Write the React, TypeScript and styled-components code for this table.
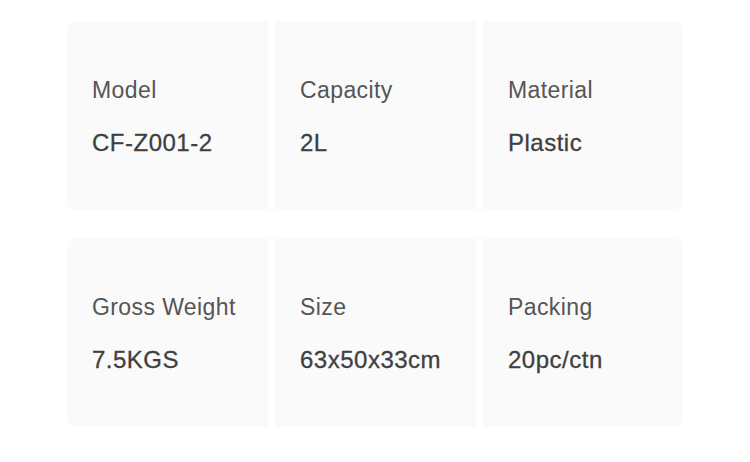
import React from "react";
import { styled, createGlobalStyle } from "styled-components";

const GlobalStyle = createGlobalStyle`
  html, body {
    margin: 0;
    padding: 0;
    background: #ffffff;
    font-family: "Liberation Sans", Arial, sans-serif;
  }
`;

const Page = styled.div`
  width: 750px;
  height: 462px;
  padding: 21px 0 0 67px;
  box-sizing: border-box;
`;

const Grid = styled.div`
  display: grid;
  grid-template-columns: 201px 201px 200px;
  grid-auto-rows: 189px;
  column-gap: 7px;
  row-gap: 28px;
`;

const Card = styled.div<{ $corner?: "left" | "right" }>`
  background: #fafafa;
  padding: 56px 0 0 25px;
  box-sizing: border-box;
  border-radius: ${(p) =>
    p.$corner === "left"
      ? "10px 0 0 10px"
      : p.$corner === "right"
      ? "0 10px 10px 0"
      : "0"};
`;

const Label = styled.div`
  font-size: 23px;
  line-height: 26px;
  letter-spacing: 0.4px;
  color: #555555;
`;

const Value = styled.div`
  margin-top: 27px;
  font-size: 24px;
  line-height: 26px;
  letter-spacing: 0.5px;
  color: #404040;
  -webkit-text-stroke: 0.3px #404040;
`;

const specs = [
  { label: "Model", value: "CF-Z001-2" },
  { label: "Capacity", value: "2L" },
  { label: "Material", value: "Plastic" },
  { label: "Gross Weight", value: "7.5KGS" },
  { label: "Size", value: "63x50x33cm" },
  { label: "Packing", value: "20pc/ctn" },
];

const App = () => {
  return (
    <>
      <GlobalStyle />
      <Page>
        <Grid>
          {specs.map((s, i) => (
            <Card
              key={s.label}
              $corner={i % 3 === 0 ? "left" : i % 3 === 2 ? "right" : undefined}
            >
              <Label>{s.label}</Label>
              <Value>{s.value}</Value>
            </Card>
          ))}
        </Grid>
      </Page>
    </>
  );
};

export default App;
